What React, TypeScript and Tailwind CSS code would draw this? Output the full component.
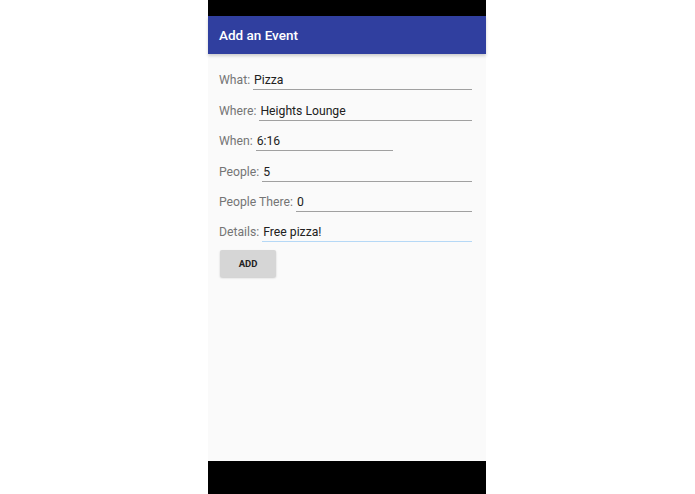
import React from "react";

const Row = ({
  label,
  value,
  width,
  focused,
}: {
  label: string;
  value: string;
  width?: string;
  focused?: boolean;
}) => (
  <div className="flex h-[30.4px] items-end">
    <span className="text-[12.2px] leading-[16px] text-[#757575] pb-[2px] mr-[3px]">{label}</span>
    <div
      className={
        (width ? width : "flex-1") +
        " pb-[1px] border-b " +
        (focused ? "border-[#b5d8f6]" : "border-[#a0a0a0]")
      }
    >
      <span className="block pl-[1px] text-[12.2px] leading-[16px] text-[#212121]">{value}</span>
    </div>
  </div>
);

export default function App() {
  return (
    <div
      className="w-[695px] h-[494px] bg-white flex pl-[208px]"
      style={{ fontFamily: "Roboto, 'Noto Sans', sans-serif" }}
    >
      <div className="w-[278px] h-full flex flex-col">
        <div className="h-[16px] bg-black" />
        <div className="h-[38px] bg-[#303f9f] flex items-center pl-[11px] shadow-[0_2px_3px_rgba(0,0,0,0.18)] relative z-10">
          <span className="text-white text-[13.5px] font-medium">Add an Event</span>
        </div>
        <div className="flex-1 bg-[#fafafa] pt-[6px] pl-[11px] pr-[14px]">
          <Row label="What:" value="Pizza" />
          <Row label="Where:" value="Heights Lounge" />
          <Row label="When:" value="6:16" width="w-[137px]" />
          <Row label="People:" value="5" />
          <Row label="People There:" value="0" />
          <Row label="Details:" value="Free pizza!" focused />
          <button className="mt-[8px] ml-[1px] w-[56px] h-[27px] bg-[#d6d6d6] rounded-[2px] shadow-[0_1px_2px_rgba(0,0,0,0.2)] text-[9.5px] font-bold text-[#222] flex items-center justify-center">
            ADD
          </button>
        </div>
        <div className="h-[33px] bg-black" />
      </div>
    </div>
  );
}
